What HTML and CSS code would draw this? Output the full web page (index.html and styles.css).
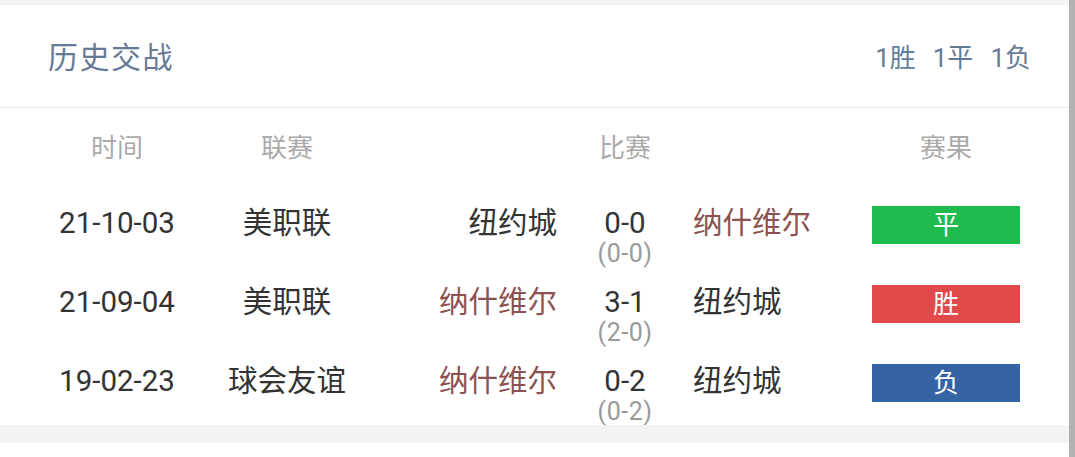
FILE: index.html
```html
<!DOCTYPE html>
<html lang="zh">
<head>
<meta charset="utf-8">
<link rel="stylesheet" href="styles.css">
</head>
<body>
<div class="page">
  <div class="main">
    <div class="band-top"></div>
    <section class="card">
      <header class="card-head">
        <h2 class="title">历史交战</h2>
        <div class="summary"><span>1胜</span><span>1平</span><span>1负</span></div>
      </header>
      <div class="table">
        <div class="row head">
          <div class="c-date">时间</div>
          <div class="c-league">联赛</div>
          <div class="c-home"></div>
          <div class="c-score">比赛</div>
          <div class="c-away"></div>
          <div class="c-result">赛果</div>
        </div>
        <div class="row">
          <div class="c-date">21-10-03</div>
          <div class="c-league">美职联</div>
          <div class="c-home">纽约城</div>
          <div class="c-score"><div class="score">0-0</div><div class="half">(0-0)</div></div>
          <div class="c-away team-hl">纳什维尔</div>
          <div class="c-result"><span class="badge draw">平</span></div>
        </div>
        <div class="row">
          <div class="c-date">21-09-04</div>
          <div class="c-league">美职联</div>
          <div class="c-home team-hl">纳什维尔</div>
          <div class="c-score"><div class="score">3-1</div><div class="half">(2-0)</div></div>
          <div class="c-away">纽约城</div>
          <div class="c-result"><span class="badge win">胜</span></div>
        </div>
        <div class="row">
          <div class="c-date">19-02-23</div>
          <div class="c-league">球会友谊</div>
          <div class="c-home team-hl">纳什维尔</div>
          <div class="c-score"><div class="score">0-2</div><div class="half">(0-2)</div></div>
          <div class="c-away">纽约城</div>
          <div class="c-result"><span class="badge lose">负</span></div>
        </div>
      </div>
    </section>
    <div class="band-bottom"></div>
  </div>
  <div class="scrollbar"></div>
</div>
</body>
</html>
```

FILE: styles.css
```css
* { box-sizing: border-box; margin: 0; padding: 0; }
html, body { height: 100%; }
body {
  background: #fff;
  font-family: Roboto, "Noto Sans CJK SC", sans-serif;
  color: #333;
  overflow: hidden;
}
.page {
  display: flex;
  height: 457px;
}
.main {
  flex: 1;
  display: flex;
  flex-direction: column;
}
.scrollbar {
  width: 6px;
  background: #b2b2b2;
}
.band-top {
  height: 5px;
  background: #f4f4f4;
}
.band-bottom {
  height: 18px;
  background: #f3f3f3;
}
.card {
  background: #fff;
}
.card-head {
  height: 103px;
  border-bottom: 1px solid #e8e8e8;
  display: flex;
  align-items: center;
  justify-content: space-between;
  padding: 0 38px 0 48px;
}
.title {
  font-weight: 400;
  font-size: 30px;
  color: #667a97;
  letter-spacing: 1.5px;
  padding-bottom: 2px;
}
.summary {
  display: flex;
  gap: 17px;
  font-size: 26px;
  color: #667a97;
  padding-bottom: 2px;
}
.row {
  display: grid;
  grid-template-columns: 234px 106px 217px 136px 153px 200px;
  padding-top: 18px;
  height: 79px;
  font-size: 29.5px;
  line-height: 35px;
  white-space: nowrap;
}
.row.head {
  height: 80px;
  padding-top: 0;
  align-items: center;
  font-size: 26px;
  color: #aaa;
}
.c-date, .c-league, .c-score {
  display: flex;
  flex-direction: column;
  align-items: center;
}
.c-home { text-align: right; }
.c-away { text-align: left; }
.half {
  font-size: 25px;
  line-height: 26px;
  color: #999;
  letter-spacing: 0.5px;
}
.team-hl { color: #8d5150; }
.c-result { display: flex; justify-content: center; align-items: flex-start; }
.badge {
  display: block;
  width: 148px;
  height: 38px;
  line-height: 38px;
  text-align: center;
  color: #fff;
  font-size: 26px;
}
.badge.draw { background: #1fbb4f; }
.badge.win { background: #e04a4a; }
.badge.lose { background: #3464a6; }
```
